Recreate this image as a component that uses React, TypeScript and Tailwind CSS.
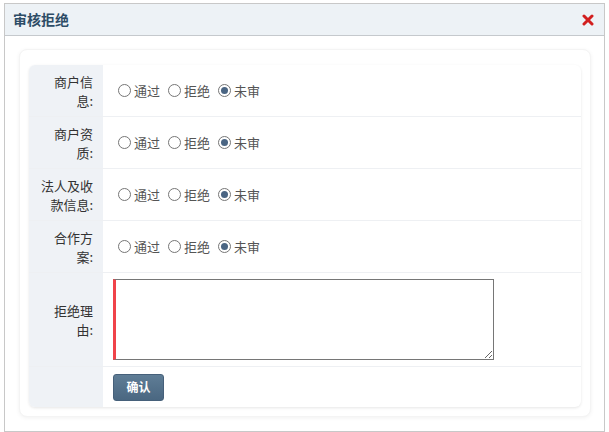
import React, { useState } from 'react';

const rows = [
  { key: 'info', label: ['商户信', '息:'] },
  { key: 'qual', label: ['商户资', '质:'] },
  { key: 'legal', label: ['法人及收', '款信息:'] },
  { key: 'plan', label: ['合作方', '案:'] },
];

function Radio({ checked, label, onClick }: { checked: boolean; label: string; onClick: () => void }) {
  return (
    <label className="flex items-center cursor-pointer mr-[8px]" onClick={onClick}>
      <span className="w-[13px] h-[13px] rounded-full border border-[#767676] bg-white flex items-center justify-center mr-[3px]">
        {checked && <span className="w-[7px] h-[7px] rounded-full bg-[#4a6583]" />}
      </span>
      <span className="text-[13px] text-[#555]">{label}</span>
    </label>
  );
}

export default function App() {
  const [values, setValues] = useState<Record<string, string>>({
    info: 'none',
    qual: 'none',
    legal: 'none',
    plan: 'none',
  });
  const [reason, setReason] = useState('');

  return (
    <div
      className="w-[609px] h-[432px] bg-white relative overflow-hidden"
      style={{ fontFamily: '"Noto Sans CJK SC", "Noto Sans", sans-serif' }}
    >
      <div className="absolute left-[4px] top-[3px] w-[601px] h-[429px] border border-[#c8c8c8] bg-white flex flex-col">
        {/* header */}
        <div className="h-[32px] bg-[#edf2f6] border-b border-[#c5c9cd] flex items-center justify-between pl-[8px] pr-[10px]">
          <span className="text-[14px] font-bold text-[#2d4c66]">审核拒绝</span>
          <svg width="12" height="12" viewBox="0 0 12 12">
            <path d="M2 2 L10 10 M10 2 L2 10" stroke="#d21f1f" strokeWidth="3" strokeLinecap="round" />
          </svg>
        </div>

        <div className="px-[14px] pt-[13px]">
          <div className="rounded-[8px] bg-white shadow-[0_1px_4px_rgba(0,0,0,0.06)] border border-[#f4f4f4] pt-[15px] pb-[9px] px-[9px] w-[572px]">
            <div className="rounded-[6px] overflow-hidden shadow-[0_1px_3px_rgba(0,0,0,0.1)]">
              {rows.map((r) => (
                <div key={r.key} className="flex h-[52px] border-b border-[#eef0f3]">
                  <div className="w-[74px] bg-[#eff2f6] flex flex-col justify-center items-end pr-[10px] text-[13px] leading-[19px] text-[#333]">
                    <span>{r.label[0]}</span>
                    <span>{r.label[1]}</span>
                  </div>
                  <div className="flex-1 flex items-center pl-[15px]">
                    <Radio checked={values[r.key] === 'pass'} label="通过" onClick={() => setValues({ ...values, [r.key]: 'pass' })} />
                    <Radio checked={values[r.key] === 'reject'} label="拒绝" onClick={() => setValues({ ...values, [r.key]: 'reject' })} />
                    <Radio checked={values[r.key] === 'none'} label="未审" onClick={() => setValues({ ...values, [r.key]: 'none' })} />
                  </div>
                </div>
              ))}
              <div className="flex h-[94px] border-b border-[#eef0f3]">
                <div className="w-[74px] bg-[#eff2f6] flex flex-col justify-center items-end pr-[10px] text-[13px] leading-[19px] text-[#333]">
                  <span>拒绝理</span>
                  <span>由:</span>
                </div>
                <div className="flex-1 pl-[10px] pt-[6px]">
                  <textarea
                    value={reason}
                    onChange={(e) => setReason(e.target.value)}
                    className="block w-[381px] h-[81px] border border-[#767676] border-l-[3px] border-l-[#f0434a] outline-none"
                  />
                </div>
              </div>
              <div className="flex h-[40px]">
                <div className="w-[74px] bg-[#eff2f6]" />
                <div className="flex-1 pl-[10px] pt-[6px]">
                  <button className="w-[51px] h-[27px] rounded-[3px] bg-gradient-to-b from-[#5f7d96] to-[#4a6781] border border-[#46607a] text-white text-[12px] font-bold">
                    确认
                  </button>
                </div>
              </div>
            </div>
          </div>
        </div>
      </div>
    </div>
  );
}
